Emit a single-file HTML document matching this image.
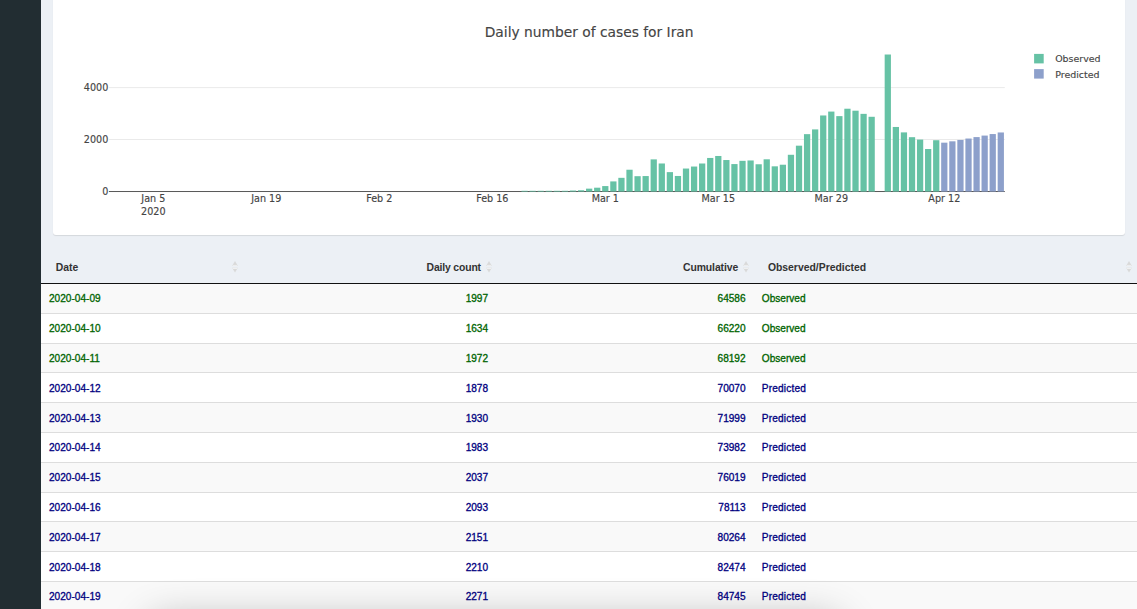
<!DOCTYPE html>
<html lang="en">
<head>
<meta charset="utf-8">
<title>Daily number of cases for Iran</title>
<style>
html,body{margin:0;padding:0;}
body{width:1137px;height:609px;overflow:hidden;position:relative;background:#ecf0f5;
 font-family:"Liberation Sans",sans-serif;}
.sidebar{position:absolute;left:0;top:0;width:41px;height:609px;background:#222d32;}
.box{position:absolute;left:53px;top:-20px;width:1072px;height:255px;background:#fff;border-radius:3px;
 box-shadow:0 1px 1px rgba(0,0,0,0.1);}
svg.chart{position:absolute;left:0;top:0;}
svg.chart text{font-family:"DejaVu Sans","Liberation Sans",sans-serif;fill:#444;stroke:#444;stroke-width:0.14px;}
svg.chart .tick text{font-size:9.62px;}
svg.chart .leg text{font-size:9.45px;}
svg.chart text.title{font-size:13.8px;}
.tbl{position:absolute;left:41px;top:0;width:1096px;height:609px;}
.thead{position:absolute;left:0;top:250.7px;width:1096px;height:32.5px;border-bottom:1px solid #111;}
.th{position:absolute;top:1.2px;height:32.5px;line-height:32.5px;font-weight:bold;font-size:10.4px;color:#333;box-sizing:border-box;padding:0 14.7px;white-space:nowrap;}
.th .sort{position:absolute;right:4.7px;top:9.5px;}
.tr{position:absolute;left:0;width:1096px;height:29.8px;box-sizing:border-box;border-top:1px solid #ddd;}
.tr.odd{background:#f9f9f9;}
.tr.even{background:#fff;}
.rw{position:absolute;left:0;width:1096px;height:29px;}
.rw.obs{color:#006400;}
.rw.prd{color:#000080;}
.rw.prd .c4{letter-spacing:0.18px;}
.td{position:absolute;top:0;height:29px;line-height:29px;-webkit-text-stroke:0.3px currentColor;font-size:10.1px;box-sizing:border-box;padding:0 8px;white-space:nowrap;}
.c1{left:0;width:201.6px;}
.c2{left:201.6px;width:254.1px;}
.c3{left:455.7px;width:256.5px;}
.c4{left:712.2px;width:383.8px;}
.th.c2{padding-right:15.8px;}
.th.c3{padding-right:15px;}
.td.c4{padding-left:8.6px;}
.td.c2{padding-right:8.6px;}
.td.c3{padding-right:7.6px;}
.r{text-align:right;}
.shade{position:absolute;left:155px;top:626px;width:680px;height:30px;border-radius:8px;box-shadow:0 0 40px 5px rgba(0,0,0,0.3);}
</style>
</head>
<body>
<div class="sidebar"></div>
<div class="box"></div>
<svg class="chart" width="1137" height="250" viewBox="0 0 1137 250">
<line x1="108.9" x2="1004.8" y1="139.50" y2="139.50" stroke="#eaeaea" stroke-width="1"/>
<line x1="108.9" x2="1004.8" y1="87.60" y2="87.60" stroke="#eaeaea" stroke-width="1"/>
<line x1="108.9" x2="1004.8" y1="191.52" y2="191.52" stroke="#444444" stroke-width="0.9"/>
<g shape-rendering="auto">
<rect x="521.46" y="190.80" width="6.25" height="0.75" fill="#66c2a5"/>
<rect x="529.53" y="190.80" width="6.25" height="0.75" fill="#66c2a5"/>
<rect x="537.60" y="190.80" width="6.25" height="0.75" fill="#66c2a5"/>
<rect x="545.67" y="190.80" width="6.25" height="0.75" fill="#66c2a5"/>
<rect x="553.75" y="190.80" width="6.25" height="0.75" fill="#66c2a5"/>
<rect x="561.82" y="190.80" width="6.25" height="0.75" fill="#66c2a5"/>
<rect x="569.89" y="190.52" width="6.25" height="1.03" fill="#66c2a5"/>
<rect x="577.96" y="190.26" width="6.25" height="1.29" fill="#66c2a5"/>
<rect x="586.03" y="188.65" width="6.25" height="2.90" fill="#66c2a5"/>
<rect x="594.10" y="187.69" width="6.25" height="3.86" fill="#66c2a5"/>
<rect x="602.17" y="186.08" width="6.25" height="5.47" fill="#66c2a5"/>
<rect x="610.25" y="181.41" width="6.25" height="10.14" fill="#66c2a5"/>
<rect x="618.32" y="177.83" width="6.25" height="13.72" fill="#66c2a5"/>
<rect x="626.39" y="169.73" width="6.25" height="21.82" fill="#66c2a5"/>
<rect x="634.46" y="176.19" width="6.25" height="15.36" fill="#66c2a5"/>
<rect x="642.53" y="176.06" width="6.25" height="15.49" fill="#66c2a5"/>
<rect x="650.60" y="159.38" width="6.25" height="32.17" fill="#66c2a5"/>
<rect x="658.67" y="163.48" width="6.25" height="28.07" fill="#66c2a5"/>
<rect x="666.75" y="172.12" width="6.25" height="19.43" fill="#66c2a5"/>
<rect x="674.82" y="175.96" width="6.25" height="15.59" fill="#66c2a5"/>
<rect x="682.89" y="168.54" width="6.25" height="23.01" fill="#66c2a5"/>
<rect x="690.96" y="166.54" width="6.25" height="25.01" fill="#66c2a5"/>
<rect x="699.03" y="163.50" width="6.25" height="28.05" fill="#66c2a5"/>
<rect x="707.10" y="157.95" width="6.25" height="33.60" fill="#66c2a5"/>
<rect x="715.17" y="155.98" width="6.25" height="35.57" fill="#66c2a5"/>
<rect x="723.25" y="160.03" width="6.25" height="31.52" fill="#66c2a5"/>
<rect x="731.32" y="164.07" width="6.25" height="27.48" fill="#66c2a5"/>
<rect x="739.39" y="160.83" width="6.25" height="30.72" fill="#66c2a5"/>
<rect x="747.46" y="160.47" width="6.25" height="31.08" fill="#66c2a5"/>
<rect x="755.53" y="164.26" width="6.25" height="27.29" fill="#66c2a5"/>
<rect x="763.60" y="159.30" width="6.25" height="32.25" fill="#66c2a5"/>
<rect x="771.67" y="166.33" width="6.25" height="25.22" fill="#66c2a5"/>
<rect x="779.75" y="164.72" width="6.25" height="26.83" fill="#66c2a5"/>
<rect x="787.82" y="154.78" width="6.25" height="36.77" fill="#66c2a5"/>
<rect x="795.89" y="145.68" width="6.25" height="45.87" fill="#66c2a5"/>
<rect x="803.96" y="134.15" width="6.25" height="57.40" fill="#66c2a5"/>
<rect x="812.03" y="129.41" width="6.25" height="62.14" fill="#66c2a5"/>
<rect x="820.10" y="115.47" width="6.25" height="76.08" fill="#66c2a5"/>
<rect x="828.17" y="111.58" width="6.25" height="79.97" fill="#66c2a5"/>
<rect x="836.25" y="116.12" width="6.25" height="75.43" fill="#66c2a5"/>
<rect x="844.32" y="108.72" width="6.25" height="82.83" fill="#66c2a5"/>
<rect x="852.39" y="110.70" width="6.25" height="80.85" fill="#66c2a5"/>
<rect x="860.46" y="113.86" width="6.25" height="77.69" fill="#66c2a5"/>
<rect x="868.53" y="116.79" width="6.25" height="74.76" fill="#66c2a5"/>
<rect x="884.67" y="54.51" width="6.25" height="137.04" fill="#66c2a5"/>
<rect x="892.75" y="126.97" width="6.25" height="64.58" fill="#66c2a5"/>
<rect x="900.82" y="132.39" width="6.25" height="59.16" fill="#66c2a5"/>
<rect x="908.89" y="137.19" width="6.25" height="54.36" fill="#66c2a5"/>
<rect x="916.96" y="139.58" width="6.25" height="51.97" fill="#66c2a5"/>
<rect x="925.03" y="149.00" width="6.25" height="42.55" fill="#66c2a5"/>
<rect x="933.10" y="140.23" width="6.25" height="51.32" fill="#66c2a5"/>
<rect x="941.17" y="142.67" width="6.25" height="48.88" fill="#8da0cb"/>
<rect x="949.25" y="141.32" width="6.25" height="50.23" fill="#8da0cb"/>
<rect x="957.32" y="139.94" width="6.25" height="51.61" fill="#8da0cb"/>
<rect x="965.39" y="138.54" width="6.25" height="53.01" fill="#8da0cb"/>
<rect x="973.46" y="137.09" width="6.25" height="54.46" fill="#8da0cb"/>
<rect x="981.53" y="135.58" width="6.25" height="55.97" fill="#8da0cb"/>
<rect x="989.60" y="134.05" width="6.25" height="57.50" fill="#8da0cb"/>
<rect x="997.67" y="132.47" width="6.25" height="59.08" fill="#8da0cb"/>
</g>
<g class="tick" text-anchor="end">
<text x="108.3" y="194.90">0</text>
<text x="108.3" y="143.00">2000</text>
<text x="108.3" y="91.10">4000</text>
</g>
<g class="tick" text-anchor="middle">
<text x="153.30" y="202.1">Jan 5</text>
<text x="266.30" y="202.1">Jan 19</text>
<text x="379.30" y="202.1">Feb 2</text>
<text x="492.30" y="202.1">Feb 16</text>
<text x="605.30" y="202.1">Mar 1</text>
<text x="718.30" y="202.1">Mar 15</text>
<text x="831.30" y="202.1">Mar 29</text>
<text x="944.30" y="202.1">Apr 12</text>
<text x="153.30" y="215">2020</text>
</g>
<text class="title" x="589.15" y="37" text-anchor="middle">Daily number of cases for Iran</text>
<rect x="1034.1" y="53.9" width="9.6" height="9.5" fill="#66c2a5"/>
<rect x="1034.1" y="69.1" width="9.6" height="9.5" fill="#8da0cb"/>
<g class="leg"><text x="1055.2" y="61.8">Observed</text><text x="1055.2" y="77.7">Predicted</text></g>
</svg>
<div class="tbl">
<div class="tr odd" style="top:283.00px"></div>
<div class="rw obs" style="top:284px"><div class="td c1">2020-04-09</div><div class="td c2 r">1997</div><div class="td c3 r">64586</div><div class="td c4">Observed</div></div>
<div class="tr even" style="top:312.80px"></div>
<div class="rw obs" style="top:314px"><div class="td c1">2020-04-10</div><div class="td c2 r">1634</div><div class="td c3 r">66220</div><div class="td c4">Observed</div></div>
<div class="tr odd" style="top:342.60px"></div>
<div class="rw obs" style="top:344px"><div class="td c1">2020-04-11</div><div class="td c2 r">1972</div><div class="td c3 r">68192</div><div class="td c4">Observed</div></div>
<div class="tr even" style="top:372.40px"></div>
<div class="rw prd" style="top:374px"><div class="td c1">2020-04-12</div><div class="td c2 r">1878</div><div class="td c3 r">70070</div><div class="td c4">Predicted</div></div>
<div class="tr odd" style="top:402.20px"></div>
<div class="rw prd" style="top:404px"><div class="td c1">2020-04-13</div><div class="td c2 r">1930</div><div class="td c3 r">71999</div><div class="td c4">Predicted</div></div>
<div class="tr even" style="top:432.00px"></div>
<div class="rw prd" style="top:433px"><div class="td c1">2020-04-14</div><div class="td c2 r">1983</div><div class="td c3 r">73982</div><div class="td c4">Predicted</div></div>
<div class="tr odd" style="top:461.80px"></div>
<div class="rw prd" style="top:463px"><div class="td c1">2020-04-15</div><div class="td c2 r">2037</div><div class="td c3 r">76019</div><div class="td c4">Predicted</div></div>
<div class="tr even" style="top:491.60px"></div>
<div class="rw prd" style="top:493px"><div class="td c1">2020-04-16</div><div class="td c2 r">2093</div><div class="td c3 r">78113</div><div class="td c4">Predicted</div></div>
<div class="tr odd" style="top:521.40px"></div>
<div class="rw prd" style="top:523px"><div class="td c1">2020-04-17</div><div class="td c2 r">2151</div><div class="td c3 r">80264</div><div class="td c4">Predicted</div></div>
<div class="tr even" style="top:551.20px"></div>
<div class="rw prd" style="top:553px"><div class="td c1">2020-04-18</div><div class="td c2 r">2210</div><div class="td c3 r">82474</div><div class="td c4">Predicted</div></div>
<div class="tr odd" style="top:581.00px"></div>
<div class="rw prd" style="top:582px"><div class="td c1">2020-04-19</div><div class="td c2 r">2271</div><div class="td c3 r">84745</div><div class="td c4">Predicted</div></div>
<div class="thead"><div class="th c1"><span>Date</span><svg class="sort" width="6" height="12" viewBox="0 0 6 12"><path d="M3 0.1 L5.9 5 L0.1 5 Z" fill="#d9d9d9"/><path d="M3 11.6 L5.9 6.7 L0.1 6.7 Z" fill="#d9d9d9"/><rect x="0.7" y="3.9" width="4.6" height="0.8" fill="#f6f6f6"/><rect x="0.7" y="7.0" width="4.6" height="0.8" fill="#f6f6f6"/></svg></div><div class="th c2 r"><span style="letter-spacing:-0.15px">Daily count</span><svg class="sort" width="6" height="12" viewBox="0 0 6 12"><path d="M3 0.1 L5.9 5 L0.1 5 Z" fill="#d9d9d9"/><path d="M3 11.6 L5.9 6.7 L0.1 6.7 Z" fill="#d9d9d9"/><rect x="0.7" y="3.9" width="4.6" height="0.8" fill="#f6f6f6"/><rect x="0.7" y="7.0" width="4.6" height="0.8" fill="#f6f6f6"/></svg></div><div class="th c3 r"><span style="letter-spacing:-0.08px">Cumulative</span><svg class="sort" width="6" height="12" viewBox="0 0 6 12"><path d="M3 0.1 L5.9 5 L0.1 5 Z" fill="#d9d9d9"/><path d="M3 11.6 L5.9 6.7 L0.1 6.7 Z" fill="#d9d9d9"/><rect x="0.7" y="3.9" width="4.6" height="0.8" fill="#f6f6f6"/><rect x="0.7" y="7.0" width="4.6" height="0.8" fill="#f6f6f6"/></svg></div><div class="th c4"><span>Observed/Predicted</span><svg class="sort" width="6" height="12" viewBox="0 0 6 12"><path d="M3 0.1 L5.9 5 L0.1 5 Z" fill="#d9d9d9"/><path d="M3 11.6 L5.9 6.7 L0.1 6.7 Z" fill="#d9d9d9"/><rect x="0.7" y="3.9" width="4.6" height="0.8" fill="#f6f6f6"/><rect x="0.7" y="7.0" width="4.6" height="0.8" fill="#f6f6f6"/></svg></div></div>
</div>
<div class="shade"></div>
</body>
</html>
